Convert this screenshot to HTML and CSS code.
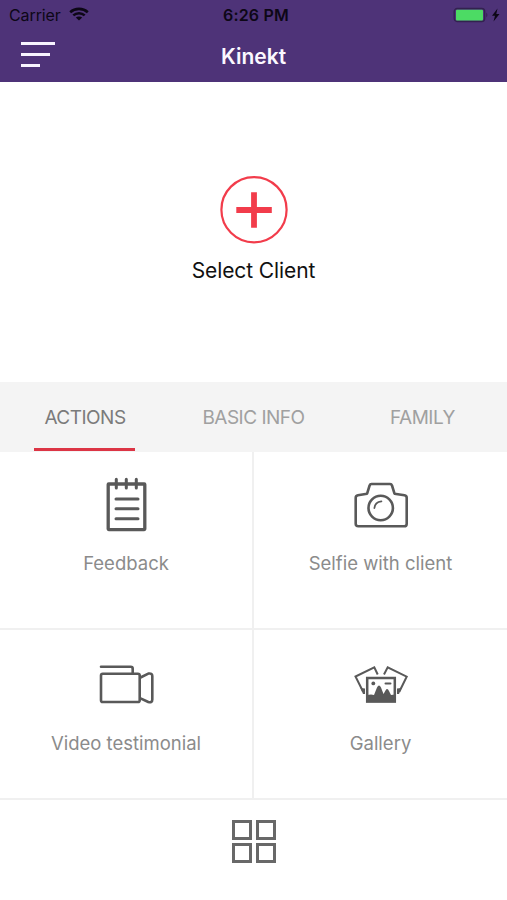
FILE: index.html
```
<!DOCTYPE html>
<html lang="en">
<head>
  <meta charset="UTF-8">
  <meta name="viewport" content="width=device-width, initial-scale=1.0">
  <title>Kinekt</title>
  <link rel="stylesheet" href="styles.css">
</head>
<body>

  <header class="header">
    <div class="status-bar">
      <div class="status-left">
        <span class="carrier">Carrier</span>
        <svg class="wifi" width="20" height="14" viewBox="0 0 20 14" fill="none" stroke="#0d0716" stroke-width="2.6">
          <path d="M1.2 5.2C6 .8 14 .8 18.8 5.2"/>
          <path d="M4.3 8.4C7.5 5.5 12.5 5.5 15.7 8.4"/>
          <path d="M10 13.500L6.800 10.500C8.500 9 11.500 9 13.200 10.500Z" fill="#0d0716" stroke="none"/>
        </svg>
      </div>
      <span class="time">6:26 PM</span>
      <svg class="battery" width="50" height="16" viewBox="0 0 50 16">
        <rect x="1.2" y="1.5" width="30.5" height="13" rx="3" fill="none" stroke="#33214f" stroke-width="1.3"/>
        <rect x="3" y="2.8" width="27" height="10.6" rx="1" fill="#4cdb64"/>
        <path d="M33.300 5.500q2.200 2.500 0 5z" fill="#33214f"/>
        <path d="M44.500 1.500L39 8.800h3L40.500 14.500L46.500 7h-3.200z" fill="#0d0716"/>
      </svg>
    </div>
    <div class="nav-bar">
      <div class="menu">
        <span></span>
        <span></span>
        <span></span>
      </div>
      <h1>Kinekt</h1>
    </div>
  </header>

  <section class="client">
    <svg width="70" height="70" viewBox="0 0 70 70" fill="none" stroke="#f23c4b">
      <circle cx="35" cy="34.7" r="32.6" stroke-width="2.200"/>
      <path d="M17.300 35h35.500M35 17.200v35.500" stroke-width="5.800"/>
    </svg>
    <p>Select Client</p>
  </section>

  <nav class="tabs">
    <div class="tab active"><span>ACTIONS</span></div>
    <div class="tab"><span>BASIC INFO</span></div>
    <div class="tab"><span>FAMILY</span></div>
  </nav>

  <main class="grid">
    <div class="card">
      <svg class="icon" viewBox="0 0 60 60">
        <rect x="12.200" y="10" width="36.600" height="45.600" rx="0.500" stroke-width="3.300"/>
        <path d="M20.300 5.300v8.700M30.300 5.300v8.700M40.300 5.300v8.700M20 25h22M20 34.800h22M20 44.700h22" stroke-width="3"/>
      </svg>
      <p>Feedback</p>
    </div>
    <div class="card">
      <svg class="icon" viewBox="0 0 60 60">
        <path d="M20.500 10h18.500q1.500 0 2 1.500l2.500 8.200 10 1.500q2.200.4 2.200 2.500v26q0 2.600-2.600 2.600H7.300q-2.600 0-2.600-2.600v-26q0-2.100 2.200-2.500l9.200-1.500 2.500-8.200q.5-1.500 1.900-1.500z"/>
        <circle cx="29.700" cy="34" r="12.200"/>
        <path d="M23.400 34q.6-6 7-6.700" stroke-width="1.800"/>
      </svg>
      <p>Selfie with client</p>
    </div>
    <div class="card">
      <svg class="icon" viewBox="0 0 60 60">
        <rect x="5" y="19.700" width="38.700" height="28.300" rx="1.800"/>
        <path d="M5 12.700h29.700q2 0 2 2v5M44.500 23.500l7.800-3.900q4-.8 4 2.400v23.500q0 3.600-4 2.500l-7.800-3.700"/>
      </svg>
      <p>Video testimonial</p>
    </div>
    <div class="card">
      <svg class="icon" viewBox="0 0 60 60">
        <path d="M12 37.500L4.500 22.500L23.300 13.300L26.700 20.500M33 20.500L36.700 13.300L55.700 22.700L48.300 37.800" stroke-width="2" stroke-linecap="butt" stroke-linejoin="miter"/>
        <path d="M9.500 34L14 34.500v5.500h-2zM50.500 34L46 34.500v5.500h2z" fill="#595959" stroke="none"/>
        <rect x="16.200" y="24" width="27.600" height="23.600" stroke-width="2.500" stroke-linejoin="miter"/>
        <path d="M16 41L20 40.500L23 41L26 33.500Q28 29.500 30 33.500L32.500 40L34.500 36.500Q36.300 33.500 38 37L40 41L44 40.500V48H16Z" fill="#595959" stroke="none"/>
        <circle cx="22.300" cy="29.400" r="1.900" fill="#595959" stroke="none"/>
        <path d="M34.500 29.400h5" stroke-width="2"/>
      </svg>
      <p>Gallery</p>
    </div>
  </main>

  <footer class="footer">
    <div class="apps">
      <span></span>
      <span></span>
      <span></span>
      <span></span>
    </div>
  </footer>

</body>
</html>
```
FILE: styles.css
```
* {
  box-sizing: border-box;
}
body {
  font-family: Inter, 'Liberation Sans', sans-serif;
  background: #fff;
  margin: 0;
  height: 900px;
  display: flex;
  flex-direction: column;
}
p, h1 {
  margin: 0;
}
svg {
  display: block;
}
/* Header */
.header {
  height: 82px;
  background: #4e3378;
}
.status-bar {
  height: 30px;
  display: grid;
  grid-template-columns: 1fr auto 1fr;
  align-items: center;
  padding: 0 4px 0 9px;
  color: #0d0716;
}
.status-left {
  display: flex;
  align-items: center;
  gap: 8px;
}
.carrier {
  font-size: 16px;
  letter-spacing: -0.1px;
}
.wifi {
  margin-bottom: 2px;
}
.time {
  font-size: 16px;
  font-weight: 600;
  letter-spacing: 0.2px;
}
.battery {
  justify-self: end;
}
.nav-bar {
  height: 52px;
  display: grid;
  grid-template-columns: 1fr auto 1fr;
  align-items: center;
  padding: 0 21px;
}
.menu {
  display: flex;
  flex-direction: column;
  gap: 8px;
  padding-bottom: 3px;
}
.menu span {
  width: 34px;
  height: 3px;
  background: #f8f4ff;
}
.menu span:nth-child(2) {
  width: 29px;
}
.menu span:nth-child(3) {
  width: 19px;
}
h1 {
  color: #fbf8ff;
  font-size: 21px;
  font-weight: 600;
}
/* Selected client */
.client {
  height: 300px;
  padding-top: 93px;
  display: flex;
  flex-direction: column;
  align-items: center;
}
.client p {
  margin-top: 12px;
  font-size: 21px;
  line-height: 28px;
  letter-spacing: -0.1px;
  color: #111;
}
/* Tabs */
.tabs {
  height: 70px;
  display: flex;
  background: #f4f4f4;
}
.tab {
  flex: 1;
  display: flex;
  justify-content: center;
  font-size: 19px;
  line-height: 71px;
  letter-spacing: -0.5px;
  color: #a0a0a0;
}
.tab span {
  height: 69px;
}
.active {
  color: #7b7b7b;
}
.active span {
  padding: 0 9px 0 10px;
  border-bottom: 3px solid #dc3545;
}
/* Action cards */
.grid {
  display: grid;
  grid-template-columns: 254px 253px;
  grid-template-rows: 178px 170px;
}
.card {
  display: flex;
  flex-direction: column;
  align-items: center;
  padding-top: 22px;
  border-bottom: 2px solid #f0f0f0;
}
.card:nth-child(odd) {
  border-right: 2px solid #f0f0f0;
}
.card:nth-child(n+3) {
  padding-top: 24px;
}
.icon {
  width: 60px;
  height: 60px;
  fill: none;
  stroke: #595959;
  stroke-width: 2.6;
  stroke-linecap: round;
  stroke-linejoin: round;
}
.card p {
  margin-top: 16px;
  font-size: 18.5px;
  line-height: 26px;
  color: #8b8b8b;
}
/* Footer */
.footer {
  flex: 1;
  display: flex;
  justify-content: center;
  padding-top: 20px;
}
.apps {
  display: grid;
  grid-template-columns: 20px 20px;
  grid-template-rows: 20px 20px;
  gap: 3px 4px;
}
.apps span {
  border: 3px solid #686868;
}
```
